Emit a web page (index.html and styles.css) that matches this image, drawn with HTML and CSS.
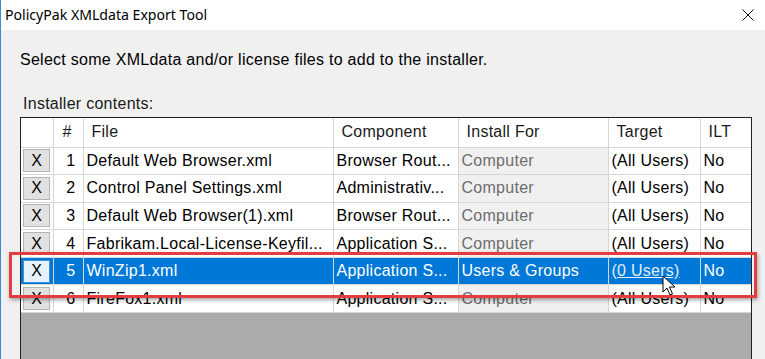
FILE: index.html
```html
<!DOCTYPE html>
<html>
<head>
<meta charset="utf-8">
<link rel="stylesheet" href="styles.css">
</head>
<body>
<div class="window">
  <div class="titlebar">
    <span class="title">PolicyPak XMLdata Export Tool</span>
    <svg class="close" width="12" height="12" viewBox="0 0 12 12"><path d="M0.5 0.5 L11.5 11.5 M11.5 0.5 L0.5 11.5" stroke="#111" stroke-width="1"/></svg>
  </div>
  <div class="content">
    <p class="intro">Select some XMLdata and/or license files to add to the installer.</p>
    <p class="label">Installer contents:</p>
    <div class="grid">
      <table>
        <colgroup>
          <col class="c1"><col class="c2"><col class="c3"><col class="c4"><col class="c5"><col class="c6"><col class="c7">
        </colgroup>
        <thead>
          <tr><th></th><th class="num">#</th><th>File</th><th>Component</th><th>Install For</th><th>Target</th><th>ILT</th></tr>
        </thead>
        <tbody>
          <tr><td class="btn"><span>X</span></td><td class="num">1</td><td>Default Web Browser.xml</td><td>Browser Rout...</td><td class="dis">Computer</td><td>(All Users)</td><td>No</td></tr>
          <tr><td class="btn"><span>X</span></td><td class="num">2</td><td>Control Panel Settings.xml</td><td>Administrativ...</td><td class="dis">Computer</td><td>(All Users)</td><td>No</td></tr>
          <tr><td class="btn"><span>X</span></td><td class="num">3</td><td>Default Web Browser(1).xml</td><td>Browser Rout...</td><td class="dis">Computer</td><td>(All Users)</td><td>No</td></tr>
          <tr><td class="btn"><span>X</span></td><td class="num">4</td><td>Fabrikam.Local-License-Keyfil...</td><td>Application S...</td><td class="dis">Computer</td><td>(All Users)</td><td>No</td></tr>
          <tr class="sel"><td class="btn"><span>X</span></td><td class="num">5</td><td>WinZip1.xml</td><td>Application S...</td><td>Users &amp; Groups</td><td><a class="link">(0 Users)</a></td><td>No</td></tr>
          <tr><td class="btn"><span>X</span></td><td class="num">6</td><td>FireFox1.xml</td><td>Application S...</td><td class="dis">Computer</td><td>(All Users)</td><td>No</td></tr>
        </tbody>
      </table>
      <div class="empty"></div>
    </div>
  </div>
  <div class="highlight"></div>
  <svg class="cursor" width="14" height="22" viewBox="0 0 14 22"><path d="M1 1 L1 17 L5 13 L8 20 L10.5 19 L7.5 12 L13 12 Z" fill="#fff" stroke="#000" stroke-width="1" stroke-linejoin="miter"/></svg>
</div>
</body>
</html>
```

FILE: styles.css
```css
* { box-sizing: border-box; }
html, body { margin: 0; padding: 0; }
body { width: 765px; height: 359px; overflow: hidden; background: #f0f0f0; }
.window {
  position: relative;
  width: 765px;
  height: 359px;
  border-left: 1px solid #3a8ad6;
  background: #f0f0f0;
  overflow: hidden;
}
.titlebar {
  height: 30px;
  background: #fff;
  display: flex;
  align-items: center;
  justify-content: space-between;
  padding: 0 11px 0 4px;
}
.title {
  font-family: "Noto Sans", "Open Sans", sans-serif;
  font-size: 14.1px;
  color: #000;
  line-height: 1;
}
.close { display: block; }
.content {
  padding: 0 0 0 19px;
  font-family: "Liberation Sans", Arial, sans-serif;
  color: #000;
  letter-spacing: 0.27px;
}
.intro {
  margin: 0;
  padding-top: 21px;
  font-size: 16px;
  line-height: 17px;
}
.label {
  margin: 0;
  padding-top: 27px;
  padding-left: 3px;
  font-size: 16px;
  line-height: 17px;
  color: #1a1a1a;
}
.grid {
  margin-top: 5px;
  width: 732px;
  height: 260px;
  border: 1px solid #222;
  background: #ababab;
  display: flex;
  flex-direction: column;
}
table {
  border-collapse: collapse;
  table-layout: fixed;
  width: 730px;
  background: #fff;
  font-size: 16px;
}
.c1 { width: 32px; }
.c2 { width: 30px; }
.c3 { width: 250px; }
.c4 { width: 125px; }
.c5 { width: 150px; }
.c6 { width: 92px; }
.c7 { width: 51px; }
th, td {
  border: 1px solid #d6d6d6;
  padding: 0 0 0 3px;
  white-space: nowrap;
  overflow: hidden;
  text-align: left;
  font-weight: normal;
}
tr > :first-child { border-left: none; }
tr > :last-child { border-right: none; }
thead th { border-top: none; height: 29px; color: #1a1a1a; padding-left: 8px; }
thead th.num { padding-left: 9px; }
tbody td { height: 27.6px; }
td.num { text-align: right; padding: 0 7px 0 0; }
td.btn { padding: 0 0 0 2px; }
td.btn span {
  display: flex;
  align-items: center;
  justify-content: center;
  width: 27px;
  height: 23px;
  background: #e1e1e1;
  border: 1px solid #b4b4b4;
  font-size: 16px;
  letter-spacing: 0;
}
td.dis { background: #f0f0f0; color: #6d6d6d; }
tr.sel td { background: #0078d7; color: #fff; }
tr.sel td.btn span { background: #e5f1fb; border-color: #3c8fd8; color: #000; }
.link { text-decoration: underline; color: #e2eefa; }
.empty { flex: 1; }
.highlight {
  position: absolute;
  left: 8px;
  top: 252px;
  width: 748px;
  height: 46px;
  border: 3px solid #e53d3f;
  box-shadow: 1px 2px 4px rgba(0,0,0,0.35);
}
.cursor {
  position: absolute;
  left: 661px;
  top: 275px;
}
```
